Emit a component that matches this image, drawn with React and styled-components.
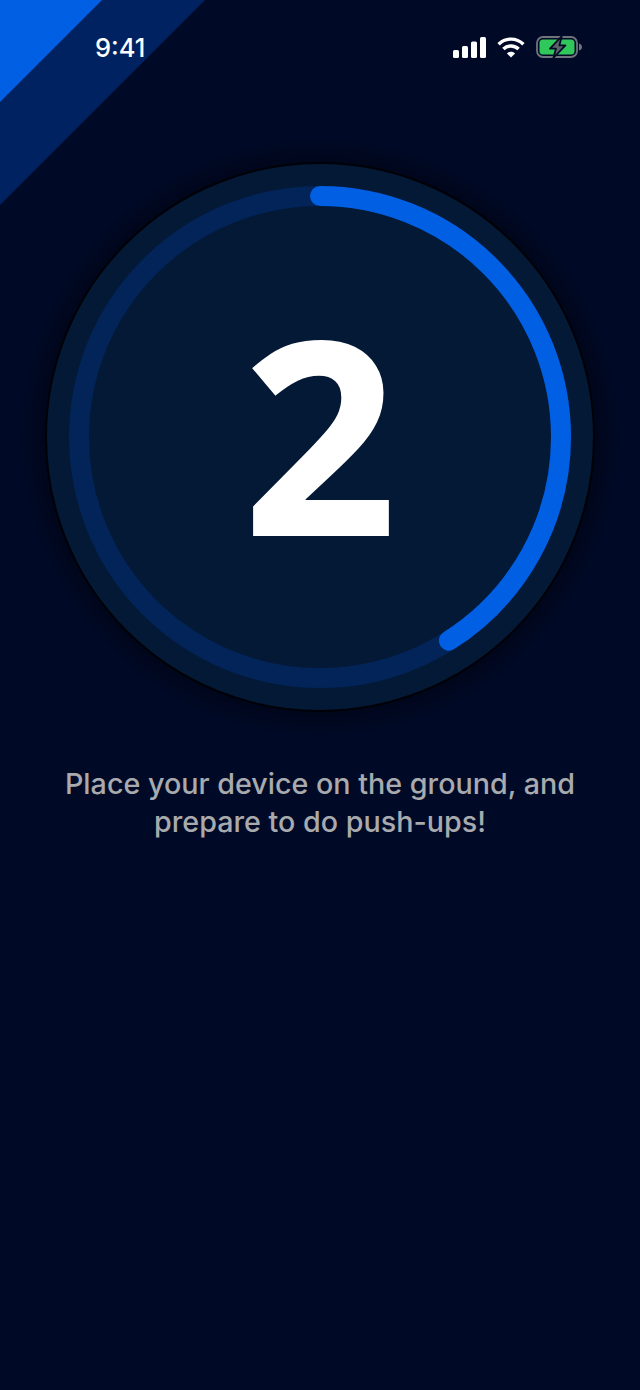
import React from "react";
import styled, { createGlobalStyle } from "styled-components";

const GlobalStyle = createGlobalStyle`
  html, body {
    margin: 0;
    padding: 0;
    background: #000a27;
  }
`;

const Screen = styled.div`
  position: relative;
  width: 640px;
  height: 1390px;
  overflow: hidden;
  background: #000a27;
  font-family: Inter, "Liberation Sans", sans-serif;
`;

const CornerStripes = styled.svg`
  position: absolute;
  top: 0;
  left: 0;
`;

const StatusBar = styled.div`
  position: relative;
  display: flex;
  align-items: center;
  justify-content: space-between;
  height: 94px;
  padding: 0 58px 0 95px;
  box-sizing: border-box;
`;

const Clock = styled.span`
  color: #ffffff;
  font-size: 25.5px;
  font-weight: 500;
`;

const StatusIcons = styled.div`
  display: flex;
  align-items: center;
  gap: 11px;
`;

const Main = styled.main`
  display: flex;
  flex-direction: column;
  align-items: center;
  padding-top: 68px;
`;

const Dial = styled.div`
  position: relative;
  display: flex;
  align-items: center;
  justify-content: center;
  width: 550px;
  height: 550px;
  padding-bottom: 10px;
  box-sizing: border-box;
  border-radius: 50%;
  background: #041936;
  border: 2px solid #000208;
  box-shadow: 0 0 24px 8px rgba(0, 0, 8, 0.5);
`;

const RingSvg = styled.svg`
  position: absolute;
  top: -2px;
  left: -2px;
`;

const Count = styled.span`
  position: relative;
  color: #ffffff;
  font-family: "Open Sans", Inter, sans-serif;
  font-size: 268px;
  line-height: 1;
  font-weight: 700;
  -webkit-text-stroke: 2px #ffffff;
`;

const Hint = styled.p`
  margin: 53px 0 0;
  width: 560px;
  color: #a8aaae;
  font-size: 28.7px;
  line-height: 38px;
  font-weight: 500;
  text-align: center;
`;

const SignalIcon = () => (
  <svg width="33" height="21" viewBox="0 0 33 21">
    <rect x="0" y="13" width="6" height="8" rx="1.5" fill="#fff" />
    <rect x="9" y="9" width="6" height="12" rx="1.5" fill="#fff" />
    <rect x="18" y="4.5" width="6" height="16.5" rx="1.5" fill="#fff" />
    <rect x="27" y="0" width="6" height="21" rx="1.5" fill="#fff" />
  </svg>
);

const WifiIcon = () => (
  <svg width="28" height="21" viewBox="0 0 28 21" fill="none" stroke="#fff" strokeWidth="3.4">
    <path d="M1.6 7.2 C8.5 0.4 19.5 0.4 26.4 7.2" />
    <path d="M6.4 12 C10.6 7.9 17.4 7.9 21.6 12" />
    <path d="M14 20.5 L9.9 16.4 C12.2 14.2 15.8 14.2 18.1 16.4 Z" fill="#fff" stroke="none" />
  </svg>
);

const BatteryIcon = () => (
  <svg width="46" height="24" viewBox="0 0 46 24">
    <rect x="1" y="2" width="40" height="20" rx="6" fill="none" stroke="#6f747c" strokeWidth="1.8" />
    <rect x="3.5" y="4.5" width="35" height="15" rx="3.5" fill="#30c85a" />
    <path d="M43 8.5 C45 9 46 10.5 46 12 C46 13.5 45 15 43 15.5 Z" fill="#6f747c" />
    <path
      d="M25.8 1 L14 13.6 H20 L17.4 23 L29.4 10.4 H23.4 Z"
      fill="#5c6168"
      stroke="#000a27"
      strokeWidth="1.8"
      strokeLinejoin="round"
    />
  </svg>
);

// progress ring, drawn from 12 o'clock going clockwise
const ProgressRing = ({ progress }) => {
  const radius = 241;
  const circumference = 2 * Math.PI * radius;

  return (
    <RingSvg width="550" height="550" viewBox="0 0 550 550">
      <circle cx="275" cy="275" r={radius} fill="none" stroke="#022458" strokeWidth="20" />
      <circle
        cx="275"
        cy="275"
        r={radius}
        fill="none"
        stroke="#005fe2"
        strokeWidth="20"
        strokeLinecap="round"
        strokeDasharray={`${circumference * progress} ${circumference}`}
        transform="rotate(-90 275 275)"
      />
    </RingSvg>
  );
};

const App = () => {
  return (
    <Screen>
      <GlobalStyle />
      <CornerStripes width="206" height="206" viewBox="0 0 206 206">
        <polygon points="0,0 205,0 0,205" fill="#002260" />
        <polygon points="0,0 102,0 0,102" fill="#005fe2" />
      </CornerStripes>
      <StatusBar>
        <Clock>9:41</Clock>
        <StatusIcons>
          <SignalIcon />
          <WifiIcon />
          <BatteryIcon />
        </StatusIcons>
      </StatusBar>
      <Main>
        <Dial>
          <ProgressRing progress={0.41} />
          <Count>2</Count>
        </Dial>
        <Hint>Place your device on the ground, and prepare to do push-ups!</Hint>
      </Main>
    </Screen>
  );
};

export default App;
